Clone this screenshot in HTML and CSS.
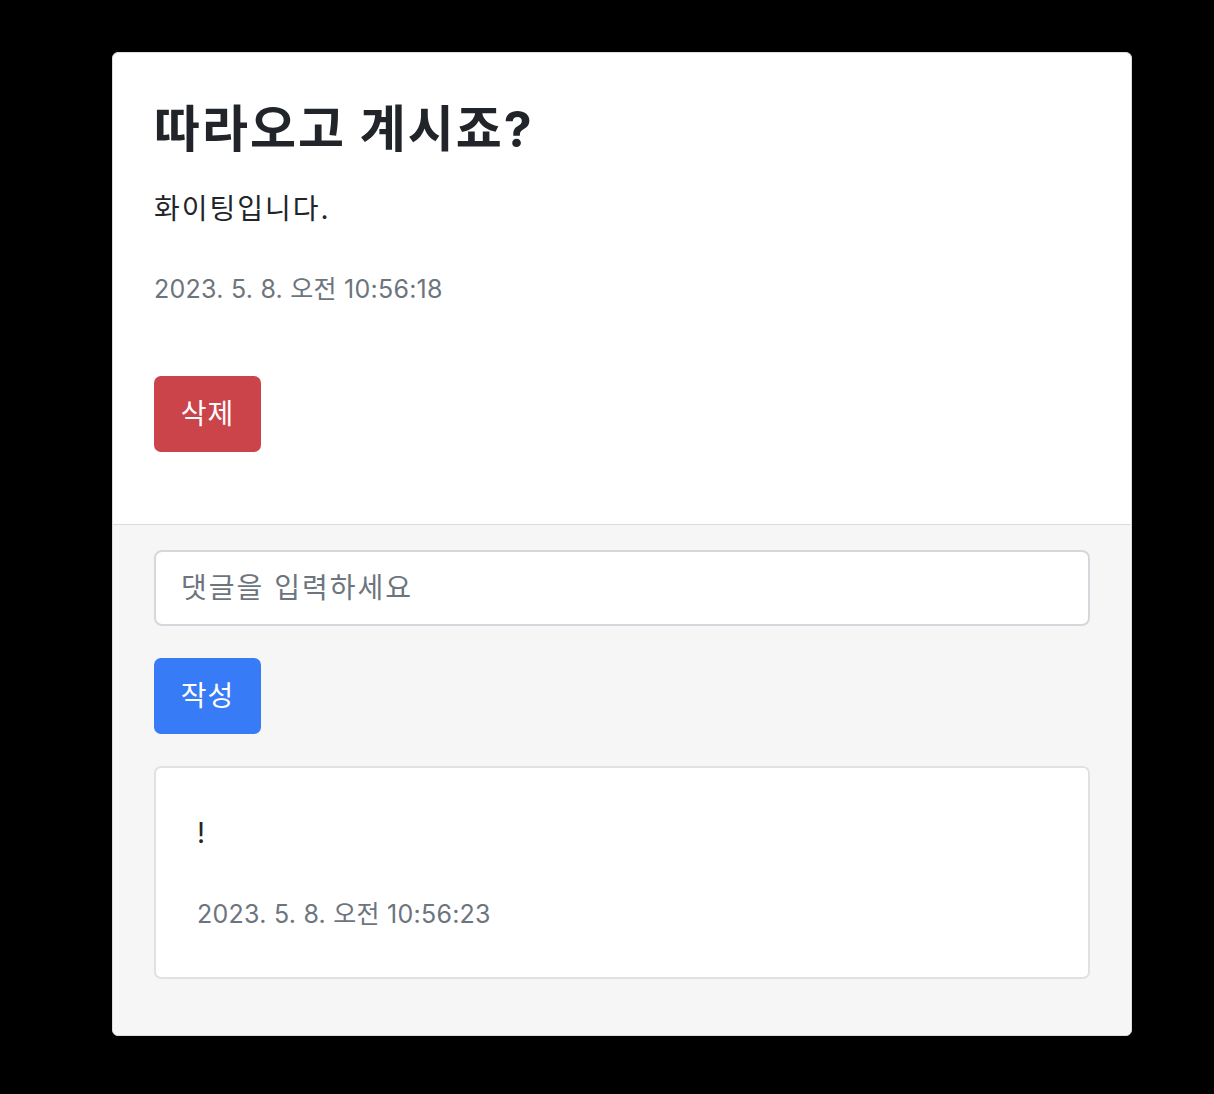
FILE: index.html
```html
<!DOCTYPE html>
<html lang="ko">
<head>
    <meta charset="UTF-8">
    <meta name="viewport" content="width=device-width, initial-scale=1.0">
    <title>게시글</title>
    <link rel="stylesheet" href="styles.css">
</head>
<body>
    <div class="card">
        <div class="card-body">
            <h1 class="post-title">따라오고 계시죠?</h1>
            <p class="post-content">화이팅입니다.</p>
            <p class="post-date">2023. 5. 8. 오전 10:56:18</p>
            <button type="button" class="btn btn-danger">삭제</button>
        </div>
        <div class="card-footer">
            <form id="commentForm" class="comment-form">
                <input type="text" class="comment-input" placeholder="댓글을 입력하세요">
                <button type="button" class="btn btn-primary">작성</button>
            </form>
            <div class="comment">
                <p class="comment-text">!</p>
                <p class="comment-date">2023. 5. 8. 오전 10:56:23</p>
            </div>
        </div>
    </div>
</body>
</html>
```

FILE: styles.css
```css
body {
    font-family: Inter, "Noto Sans CJK KR", sans-serif;
    background-color: #000000;
    color: #212529;
    margin: 0;
    padding: 52px 0 0 112px;
    font-size: 28px;
    line-height: 1.5;
}

.card {
    width: 1020px;
    box-sizing: border-box;
    background-color: #ffffff;
    border: 1px solid #dcdcdc;
    border-radius: 6px;
    overflow: hidden;
}

.card-body {
    padding: 46px 41px 72px 41px;
}

.post-title {
    margin: 0;
    font-size: 50px;
    font-weight: 700;
    line-height: 1.2;
    letter-spacing: 2px;
}

.post-content {
    margin: 29px 0 0 0;
    letter-spacing: 2px;
}

.post-date,
.comment-date {
    margin: 0;
    font-size: 25px;
    letter-spacing: 0.25px;
    color: #6c757d;
}

.post-date {
    margin-top: 41px;
}

.btn {
    font-family: inherit;
    font-size: 28px;
    line-height: 1.5;
    letter-spacing: 1px;
    color: #ffffff;
    border: none;
    border-radius: 7px;
    width: 107px;
    height: 76px;
    padding: 0;
    cursor: pointer;
}

.btn-danger {
    background-color: #cb444a;
    margin-top: 67px;
    display: block;
}

.btn-primary {
    background-color: #377bf6;
    display: block;
}

.card-footer {
    background-color: #f6f6f6;
    border-top: 1px solid #dcdcdc;
    padding: 25px 41px 56px 41px;
}

.comment-form {
    display: flex;
    flex-direction: column;
    gap: 32px;
    margin: 0 0 32px 0;
}

.comment-input {
    box-sizing: border-box;
    width: 100%;
    height: 76px;
    padding: 0 25px;
    font-family: inherit;
    font-size: 28px;
    letter-spacing: 2px;
    color: #212529;
    background-color: #ffffff;
    border: 2px solid #d4d7db;
    border-radius: 8px;
}

.comment-input::placeholder {
    color: #6c757d;
}

.comment {
    background-color: #ffffff;
    border: 2px solid #e1e1e1;
    border-radius: 7px;
    padding: 44px 41px 44px 41px;
}

.comment-text {
    margin: 0 0 42px 0;
}
```
